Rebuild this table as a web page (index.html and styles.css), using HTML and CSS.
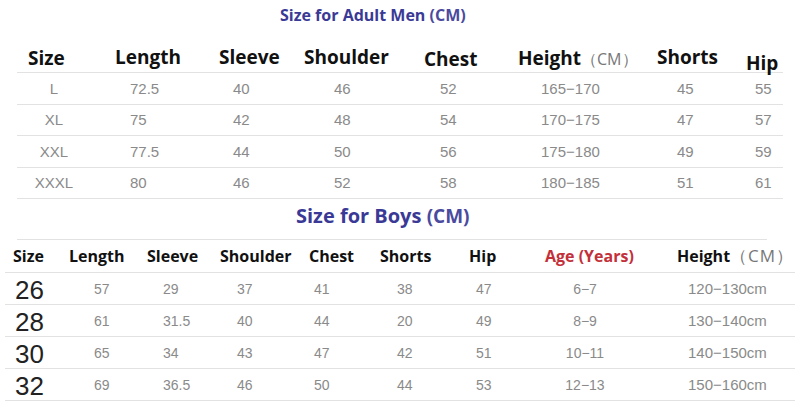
FILE: index.html
```html
<!DOCTYPE html>
<html>
<head>
<meta charset="utf-8">
<link rel="stylesheet" href="styles.css">
</head>
<body>
<div class="chart">
  <div class="title title-adult">Size for Adult Men <span class="cm">(CM)</span></div>
  <div class="adult">
    <div class="arow ahead">
      <div>Size</div><div>Length</div><div>Sleeve</div><div>Shoulder</div><div>Chest</div><div>Height<span class="unit">（CM）</span></div><div>Shorts</div><div class="hip">Hip</div>
    </div>
    <div class="arow adata"><div>L</div><div>72.5</div><div>40</div><div>46</div><div>52</div><div>165−170</div><div>45</div><div>55</div></div>
    <div class="arow adata"><div>XL</div><div>75</div><div>42</div><div>48</div><div>54</div><div>170−175</div><div>47</div><div>57</div></div>
    <div class="arow adata"><div>XXL</div><div>77.5</div><div>44</div><div>50</div><div>56</div><div>175−180</div><div>49</div><div>59</div></div>
    <div class="arow adata"><div>XXXL</div><div>80</div><div>46</div><div>52</div><div>58</div><div>180−185</div><div>51</div><div>61</div></div>
  </div>
  <div class="title title-boys">Size for Boys <span class="cm">(CM)</span></div>
  <div class="boys">
    <div class="brow bhead">
      <div>Size</div><div>Length</div><div>Sleeve</div><div>Shoulder</div><div>Chest</div><div>Shorts</div><div>Hip</div><div class="age">Age (Years)</div><div>Height<span class="unit bunit">（CM）</span></div>
    </div>
    <div class="brow bdata"><div class="num">26</div><div>57</div><div>29</div><div>37</div><div>41</div><div>38</div><div>47</div><div>6−7</div><div>120−130cm</div></div>
    <div class="brow bdata"><div class="num">28</div><div>61</div><div>31.5</div><div>40</div><div>44</div><div>20</div><div>49</div><div>8−9</div><div>130−140cm</div></div>
    <div class="brow bdata"><div class="num">30</div><div>65</div><div>34</div><div>43</div><div>47</div><div>42</div><div>51</div><div>10−11</div><div>140−150cm</div></div>
    <div class="brow bdata"><div class="num">32</div><div>69</div><div>36.5</div><div>46</div><div>50</div><div>44</div><div>53</div><div>12−13</div><div>150−160cm</div></div>
  </div>
</div>
</body>
</html>
```

FILE: styles.css
```css
html, body {
  margin: 0;
  padding: 0;
  background: #ffffff;
}
.chart {
  width: 800px;
  height: 407px;
  overflow: hidden;
  font-family: "Open Sans", "DejaVu Sans", sans-serif;
}
.title {
  font-weight: 700;
  color: #3a3a96;
  white-space: nowrap;
}
.title .cm {
  color: #4a4a9e;
}
.title-adult {
  height: 34px;
  box-sizing: border-box;
  padding-left: 280px;
  padding-top: 4px;
  font-size: 16px;
  line-height: 22px;
}
.adult {
  margin: 0 17px;
  width: 766px;
}
.arow {
  display: grid;
  grid-template-columns: 74px 114px 95px 115px 95px 140px 90px 43px;
  align-items: center;
  box-sizing: border-box;
  border-bottom: 1.5px solid #e2e2e2;
  white-space: nowrap;
}
.ahead {
  height: 39px;
  font-size: 19px;
  font-weight: 700;
  color: #111;
  padding-top: 4px;
}
.ahead > :nth-child(1) { padding-left: 11px; padding-top: 2px; }
.ahead > :nth-child(2) { padding-left: 24px; }
.ahead > :nth-child(3) { padding-left: 14px; }
.ahead > :nth-child(4) { padding-left: 4px; }
.ahead > :nth-child(5) { padding-left: 9px; padding-top: 4px; }
.ahead > :nth-child(6) { padding-left: 8px; padding-top: 2px; }
.ahead > :nth-child(7) { padding-left: 7px; }
.ahead > :nth-child(8) { padding-left: 6px; }
.ahead .hip { padding-top: 12px; }
.unit {
  font-size: 16px;
  font-weight: 400;
  color: #777;
}
.adata {
  height: 31.5px;
  font-family: "Liberation Sans", Arial, sans-serif;
  font-size: 15px;
  color: #8a8a8a;
}
.adata > :nth-child(1) { text-align: center; }
.adata > :nth-child(2) { padding-left: 39px; }
.adata > :nth-child(3) { padding-left: 28px; }
.adata > :nth-child(4) { padding-left: 34px; }
.adata > :nth-child(5) { padding-left: 25px; }
.adata > :nth-child(6) { padding-left: 31px; }
.adata > :nth-child(7) { padding-left: 27px; }
.adata > :nth-child(8) { padding-left: 15px; }
.title-boys {
  margin-left: 17px;
  width: 750px;
  height: 41px;
  box-sizing: border-box;
  padding-left: 279px;
  padding-top: 3px;
  font-size: 20px;
  line-height: 27px;
  border-bottom: 1.5px solid #e2e2e2;
}
.title-boys .cm {
  font-size: 19px;
}
.boys {
  margin-left: 5px;
  width: 790px;
}
.brow {
  display: grid;
  grid-template-columns: 60px 75px 75px 85px 70px 85px 75px 120px 145px;
  align-items: center;
  box-sizing: border-box;
  border-bottom: 1.5px solid #e2e2e2;
  white-space: nowrap;
}
.bhead {
  height: 33px;
  font-size: 16px;
  font-weight: 700;
  color: #111;
}
.bhead .age { color: #c3303a; }
.bhead > :nth-child(1) { padding-left: 8px; }
.bhead > :nth-child(2) { padding-left: 4px; }
.bhead > :nth-child(3) { padding-left: 7px; }
.bhead > :nth-child(4) { padding-left: 5px; }
.bhead > :nth-child(5) { padding-left: 9px; }
.bhead > :nth-child(6) { padding-left: 10px; }
.bhead > :nth-child(7) { padding-left: 14px; }
.bhead > :nth-child(8) { padding-left: 15px; }
.bhead > :nth-child(9) { padding-left: 27px; }
.bunit {
  font-size: 17px;
  letter-spacing: 1px;
}
.bdata {
  height: 32px;
  font-family: "Liberation Sans", Arial, sans-serif;
  font-size: 14px;
  color: #8a8a8a;
}
.bdata .num {
  font-family: "Liberation Sans", Arial, sans-serif;
  font-size: 26px;
  color: #222;
  padding-left: 10px;
  line-height: 28px;
  padding-top: 2px;
}
.bdata > :nth-child(2) { padding-left: 29px; }
.bdata > :nth-child(3) { padding-left: 23px; }
.bdata > :nth-child(4) { padding-left: 22px; }
.bdata > :nth-child(5) { padding-left: 14px; }
.bdata > :nth-child(6) { padding-left: 27px; }
.bdata > :nth-child(7) { padding-left: 21px; }
.bdata > :nth-child(8) { text-align: center; padding-right: 10px; }
.bdata > :nth-child(9) { padding-left: 38px; font-size: 15px; }
```
